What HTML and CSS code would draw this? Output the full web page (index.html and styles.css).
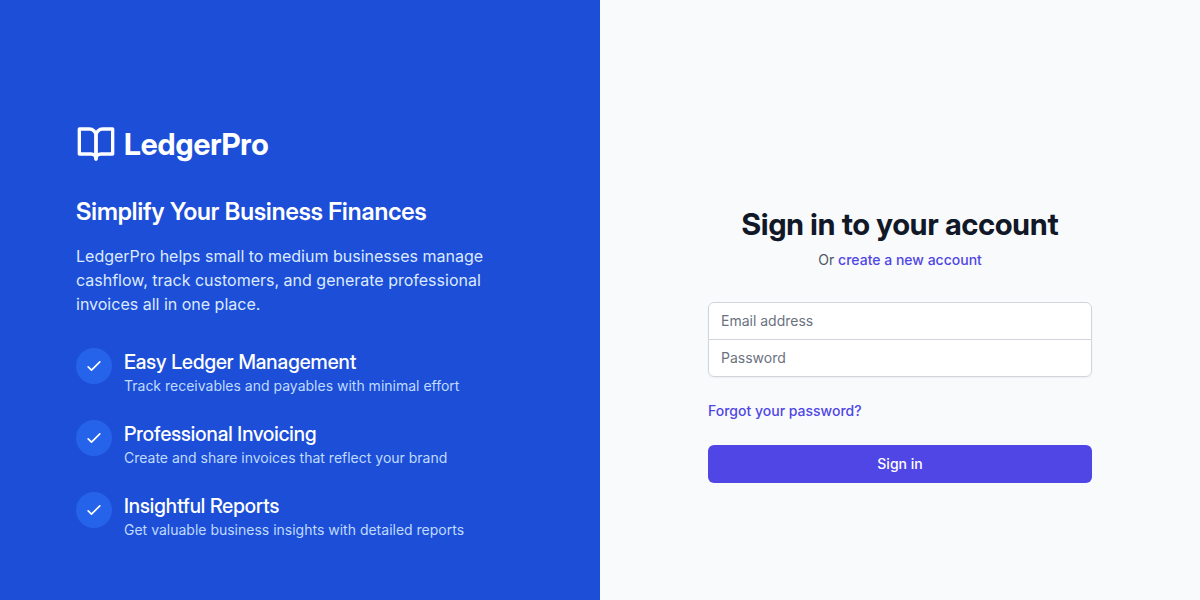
FILE: index.html
```html
<!DOCTYPE html>
<html lang="en">
<head>
<meta charset="utf-8">
<meta name="viewport" content="width=device-width, initial-scale=1">
<title>LedgerPro – Sign in</title>
<link rel="stylesheet" href="styles.css">
</head>
<body>
<div class="page">
  <section class="promo">
    <div class="promo-content">
      <div class="brand">
        <svg class="brand-icon" viewBox="0 0 24 24" aria-hidden="true"><path d="M2 3h6a4 4 0 0 1 4 4v14a3 3 0 0 0-3-3H2z"/><path d="M22 3h-6a4 4 0 0 0-4 4v14a3 3 0 0 1 3-3h7z"/></svg>
        <h1 class="brand-name">LedgerPro</h1>
      </div>
      <h2 class="headline">Simplify Your Business Finances</h2>
      <p class="lead">LedgerPro helps small to medium businesses manage cashflow, track customers, and generate professional invoices all in one place.</p>
      <ul class="features">
        <li class="feature">
          <span class="feature-icon"><svg class="check" viewBox="0 0 24 24" aria-hidden="true"><path d="M5 13l4 4L19 7"/></svg></span>
          <div class="feature-text"><h3 class="feature-title">Easy Ledger Management</h3><p class="feature-desc">Track receivables and payables with minimal effort</p></div>
        </li>
        <li class="feature">
          <span class="feature-icon"><svg class="check" viewBox="0 0 24 24" aria-hidden="true"><path d="M5 13l4 4L19 7"/></svg></span>
          <div class="feature-text"><h3 class="feature-title">Professional Invoicing</h3><p class="feature-desc">Create and share invoices that reflect your brand</p></div>
        </li>
        <li class="feature">
          <span class="feature-icon"><svg class="check" viewBox="0 0 24 24" aria-hidden="true"><path d="M5 13l4 4L19 7"/></svg></span>
          <div class="feature-text"><h3 class="feature-title">Insightful Reports</h3><p class="feature-desc">Get valuable business insights with detailed reports</p></div>
        </li>
      </ul>
    </div>
  </section>
  <main class="signin">
    <div class="signin-content">
      <h2 class="signin-title">Sign in to your account</h2>
      <p class="signin-sub">Or <a class="link" href="#register">create a new account</a></p>
      <form class="form">
        <div class="fields">
          <input class="field" type="email" placeholder="Email address" aria-label="Email address">
          <input class="field" type="password" placeholder="Password" aria-label="Password">
        </div>
        <div class="forgot"><a class="link" href="#forgot">Forgot your password?</a></div>
        <button class="submit" type="submit">Sign in</button>
      </form>
    </div>
  </main>
</div>
</body>
</html>
```
FILE: styles.css
```css
*, *::before, *::after { box-sizing: border-box; }
body, h1, h2, h3, p, ul { margin: 0; padding: 0; }
body { font-family: Inter, sans-serif; font-size: 16px; line-height: 24px; color: #111827; }
h1, h2, h3 { font-family: "Inter Display", Inter, sans-serif; }
.page { display: grid; grid-template-columns: 1fr 1fr; min-height: 100vh; }

.promo { display: flex; flex-direction: column; justify-content: center; padding: 48px 76px; background: #1d4ed8; color: #fff; }
.promo-content { max-width: 448px; padding-top: 64px; }
.brand { display: flex; align-items: center; gap: 8px; margin-bottom: 32px; }
.brand-icon { width: 40px; height: 40px; fill: none; stroke: currentColor; stroke-width: 2; stroke-linecap: round; stroke-linejoin: round; }
.brand-name { font-size: 30px; line-height: 36px; font-weight: 700; }
.headline { margin-bottom: 16px; font-size: 24px; line-height: 32px; font-weight: 600; }
.lead { margin-bottom: 32px; color: #dbeafe; }
.features { display: flex; flex-direction: column; gap: 24px; list-style: none; }
.feature { display: flex; align-items: flex-start; gap: 12px; }
.feature-icon { display: flex; padding: 8px; border-radius: 50%; background: #2563eb; }
.check { width: 20px; height: 20px; fill: none; stroke: currentColor; stroke-width: 2; stroke-linecap: round; stroke-linejoin: round; }
.feature-title { font-size: 20px; line-height: 28px; font-weight: 500; }
.feature-desc { font-size: 14px; line-height: 20px; color: #bfdbfe; }

.signin { display: flex; align-items: center; justify-content: center; padding: 48px 32px; background: #f9fafb; }
.signin-content { width: 100%; max-width: 384px; padding-top: 88px; }
.signin-title { font-size: 30px; line-height: 36px; font-weight: 700; text-align: center; }
.signin-sub { margin-top: 8px; font-size: 14px; line-height: 20px; text-align: center; color: #4b5563; }
.link { color: #4f46e5; font-weight: 500; text-decoration: none; }
.form { display: flex; flex-direction: column; gap: 24px; margin-top: 32px; font-size: 14px; line-height: 20px; }
.fields { border-radius: 6px; box-shadow: 0 1px 2px rgb(0 0 0 / 5%); }
.field { display: block; width: 100%; padding: 8px 12px; border: 1px solid #d1d5db; background: #fff; font: inherit; color: #111827; }
.field::placeholder { color: #6b7280; }
.field:first-child { border-radius: 6px 6px 0 0; }
.field:last-child { margin-top: -1px; border-radius: 0 0 6px 6px; }
.submit { padding: 8px 16px; border: 1px solid transparent; border-radius: 6px; background: #4f46e5; color: #fff; font: inherit; font-weight: 500; cursor: pointer; }
```
